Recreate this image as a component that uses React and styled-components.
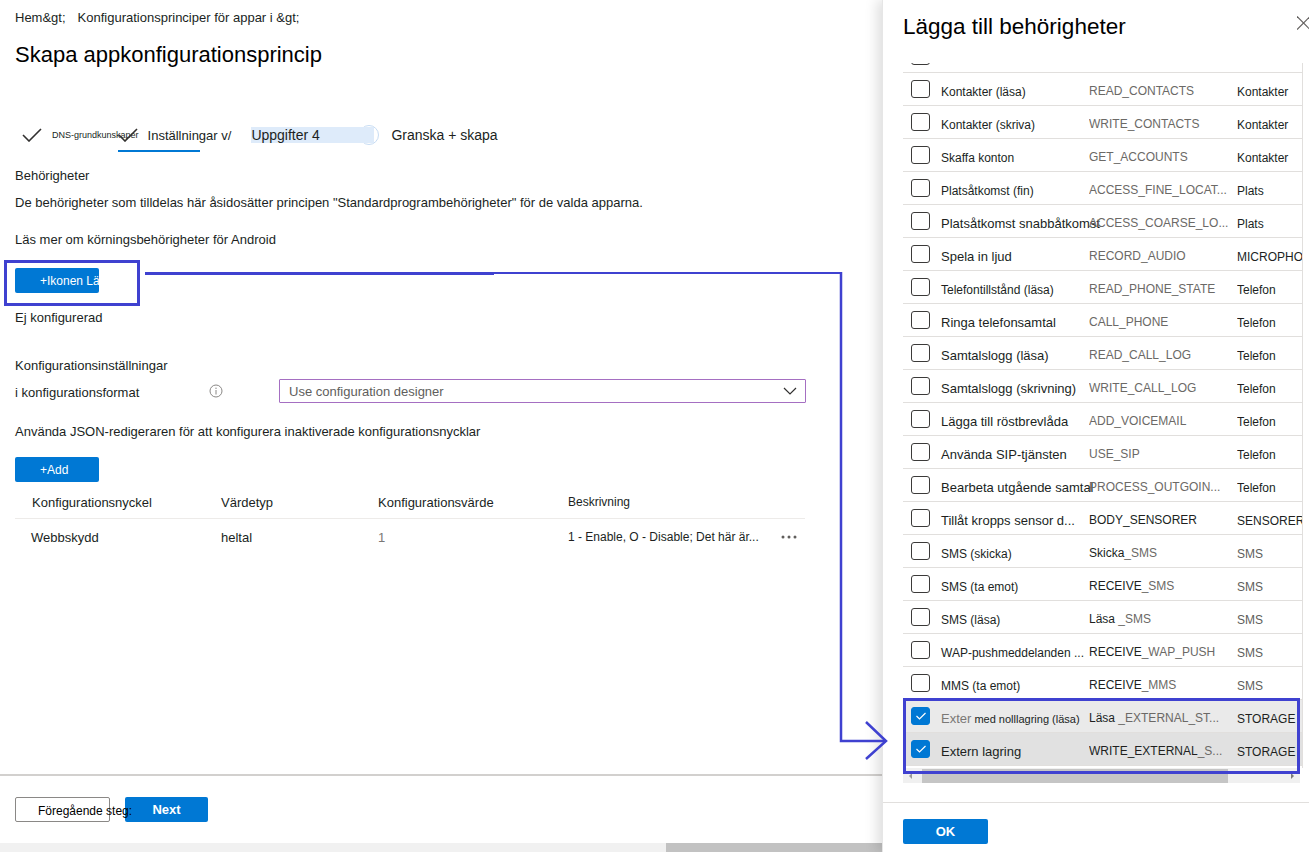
import React from 'react';
import styled, { createGlobalStyle } from 'styled-components';

const Global = createGlobalStyle`
  html, body { margin: 0; padding: 0; width: 1309px; height: 852px; overflow: hidden; background: #fff; }
  body { font-family: "Liberation Sans", Arial, sans-serif; color: #201f1e; }
  * { box-sizing: border-box; }
`;

const Shell = styled.div`
  position: relative;
  display: flex;
  width: 1309px;
  height: 852px;
  overflow: hidden;
`;

const Main = styled.main`
  width: 882px;
  flex: none;
  height: 852px;
  display: flex;
  flex-direction: column;
`;

const Content = styled.div`
  flex: 1;
  padding: 10px 0 0 15px;
  display: flex;
  flex-direction: column;
  align-items: flex-start;
`;

const Breadcrumb = styled.nav`
  display: flex;
  gap: 12px;
  font-size: 13px;
  line-height: 16px;
  color: #201f1e;
`;

const Title = styled.h1`
  margin: 15px 0 0;
  font-size: 22px;
  line-height: 28px;
  font-weight: 400;
  color: #000;
`;

const Steps = styled.div`
  display: flex;
  align-items: center;
  height: 30px;
  margin-top: 51px;
`;

const CheckIcon = styled.svg`
  flex: none;
  margin-left: ${p => p.$ml || 0}px;
`;

const SmallStepLabel = styled.span`
  font-size: 9px;
  margin-left: 10px;
  white-space: nowrap;
`;

const ActiveStep = styled.div`
  position: relative;
  display: flex;
  align-items: center;
  align-self: stretch;
  margin-left: -21px;
  &::after {
    content: '';
    position: absolute;
    left: 0;
    bottom: -2px;
    width: 82px;
    height: 2px;
    background: #0078d4;
  }
`;

const StepLabel = styled.span`
  font-size: ${p => p.$size || 14}px;
  margin-left: ${p => p.$ml || 0}px;
  white-space: nowrap;
  color: #201f1e;
`;

const StepPill = styled.span`
  position: relative;
  z-index: 1;
  margin-left: 20px;
  width: 123px;
  height: 16px;
  line-height: 16px;
  font-size: 14px;
  background: #deebfa;
  white-space: nowrap;
`;

const StepCircle = styled.span`
  width: 20px;
  height: 20px;
  margin-left: -15px;
  border: 1.5px solid #c7dcf3;
  border-radius: 50%;
  background: #fff;
`;

const Text = styled.p`
  margin: ${p => p.$mt || 0}px 0 0;
  font-size: 13px;
  line-height: 16px;
  color: #201f1e;
`;

const PrimaryButton = styled.button`
  margin-top: ${p => p.$mt || 0}px;
  width: 84px;
  height: 25px;
  padding: 0 0 0 25px;
  border: none;
  border-radius: 2px;
  background: #0078d4;
  color: #fff;
  font-family: inherit;
  font-size: 12px;
  text-align: left;
  white-space: nowrap;
  overflow: hidden;
`;

const ConfigRow = styled.div`
  display: flex;
  align-items: center;
  margin-top: 5px;
  height: 24px;
`;

const FieldLabel = styled.span`
  width: 194px;
  font-size: 13px;
  padding-top: 2px;
  color: #201f1e;
`;

const Dropdown = styled.div`
  margin-left: 56px;
  width: 527px;
  height: 24px;
  border: 1px solid #a56fc2;
  border-radius: 1px;
  display: flex;
  align-items: center;
  justify-content: space-between;
  padding: 0 8px 0 9px;
  font-size: 13px;
  color: #605e5c;
`;

const Table = styled.div`
  margin-top: 4px;
  width: 790px;
`;

const TableRow = styled.div`
  display: grid;
  grid-template-columns: 206px 157px 190px 1fr;
  align-items: center;
  height: ${p => (p.$head ? 33 : 36)}px;
  border-bottom: ${p => (p.$head ? '1px solid #edebe9' : 'none')};
  font-size: 13px;
  color: #201f1e;
`;

const Cell = styled.div`
  padding-left: ${p => p.$pl || 0}px;
  padding-right: ${p => p.$pr || 0}px;
  font-size: ${p => p.$size || 13}px;
  color: ${p => (p.$muted ? '#7a7876' : '#201f1e')};
  white-space: nowrap;
  display: flex;
  align-items: center;
  justify-content: space-between;
`;

const Footer = styled.footer`
  border-top: 2px solid #d2d0ce;
  padding: 21px 0 21px 15px;
  display: flex;
  gap: 15px;
`;

const SecondaryButton = styled.button`
  position: relative;
  z-index: 1;
  width: 95px;
  height: 25px;
  padding: 3px 0 0 22px;
  border: 1px solid #8a8886;
  border-radius: 2px;
  background: #fff;
  color: #000;
  font-family: inherit;
  font-size: 12px;
  text-align: left;
  white-space: nowrap;
  overflow: visible;
`;

const BoldButton = styled.button`
  width: ${p => p.$w || 83}px;
  height: 25px;
  margin-top: ${p => p.$mt || 0}px;
  border: none;
  border-radius: 2px;
  background: #0078d4;
  color: #fff;
  font-family: inherit;
  font-size: 13px;
  font-weight: 700;
`;

const PageScroll = styled.div`
  height: 9px;
  background: #f1f1f1;
  display: flex;
  align-items: center;
`;

const PageThumb = styled.div`
  margin-left: auto;
  width: 216px;
  height: 9px;
  background: #c2c2c2;
`;

const Panel = styled.aside`
  width: 427px;
  flex: none;
  height: 852px;
  position: relative;
  z-index: 2;
  background: #fff;
  box-shadow: -5px 0 12px rgba(0, 0, 0, 0.13);
  border-left: 1px solid #e6e6e6;
  padding-left: 20px;
  display: flex;
  flex-direction: column;
  overflow: hidden;
`;

const PanelHeader = styled.header`
  margin-top: 12px;
  height: 30px;
  display: flex;
  justify-content: space-between;
  align-items: flex-start;
`;

const PanelTitle = styled.h2`
  margin: 0;
  font-size: 22.5px;
  line-height: 30px;
  font-weight: 400;
  color: #000;
`;

const CloseIcon = styled.svg`
  margin-top: 4px;
`;

const Viewport = styled.div`
  margin-top: 21px;
  width: 400px;
  height: 705px;
  overflow: hidden;
  border-right: 1px solid #e1dfdd;
`;

const List = styled.div`
  margin-top: -23px;
`;

const PermRow = styled.div`
  display: grid;
  grid-template-columns: 38px 148px 148px 1fr;
  align-items: center;
  height: 33px;
  border-bottom: 1px solid #e1dfdd;
  background: ${p => p.$bg || '#fff'};
`;

const Box = styled.span`
  margin-left: 8px;
  width: 19px;
  height: 18px;
  border-radius: 3px;
  border: 1.5px solid ${p => (p.$checked ? '#0078d4' : '#3b3a39')};
  background: ${p => (p.$checked ? '#0078d4' : '#fff')};
  display: flex;
  align-items: center;
  justify-content: center;
`;

const NameCell = styled.span`
  font-size: ${p => (p.$large ? 13 : 12)}px;
  color: #201f1e;
  white-space: nowrap;
  padding-top: 5px;
`;

const PermCell = styled.span`
  font-size: 12px;
  color: ${p => (p.$dark ? '#201f1e' : '#6b6966')};
  white-space: nowrap;
  overflow: hidden;
  padding-top: 3px;
`;

const GroupCell = styled.span`
  font-size: 12px;
  color: ${p => (p.$muted ? '#605e5c' : '#201f1e')};
  white-space: nowrap;
  overflow: hidden;
  padding-top: 5px;
`;

const Faint = styled.span`
  color: ${p => p.$c || '#8a8886'};
  font-size: ${p => (p.$size ? `${p.$size}px` : 'inherit')};
`;

const HScroll = styled.div`
  width: 397px;
  height: 15px;
  background: #f0f0f0;
  display: flex;
  align-items: center;
  padding: 0 6px;
`;

const HThumb = styled.div`
  margin-left: 10px;
  width: 306px;
  height: 14px;
  background: #c5c5c5;
`;

const Arrow = styled.span`
  width: 0;
  height: 0;
  border-top: 3px solid transparent;
  border-bottom: 3px solid transparent;
  ${p => (p.$right ? 'border-left: 3px solid #7a7a7a; margin-left: auto;' : 'border-right: 3px solid #9a9a9a;')}
`;

const PanelDivider = styled.div`
  margin: 19px 0 0 -20px;
  width: 427px;
  height: 1px;
  background: #e1dfdd;
`;

const Overlay = styled.svg`
  position: absolute;
  left: 0;
  top: 0;
  pointer-events: none;
  z-index: 10;
`;

const Check = ({ ml }) => (
  <CheckIcon $ml={ml} width="20" height="14" viewBox="0 0 20 14">
    <polyline points="1,7 7,13 19,1" fill="none" stroke="#323130" strokeWidth="1.6" />
  </CheckIcon>
);

const InfoIcon = () => (
  <svg width="14" height="14" viewBox="0 0 14 14">
    <circle cx="7" cy="7" r="6" fill="none" stroke="#8a8886" strokeWidth="1" />
    <line x1="7" y1="6" x2="7" y2="10.5" stroke="#8a8886" strokeWidth="1" />
    <circle cx="7" cy="4.2" r="0.7" fill="#8a8886" />
  </svg>
);

const Chevron = () => (
  <svg width="14" height="8" viewBox="0 0 14 8">
    <polyline points="1,1 7,7 13,1" fill="none" stroke="#323130" strokeWidth="1.2" />
  </svg>
);

const MoreDots = () => (
  <svg width="16" height="4" viewBox="0 0 16 4">
    <circle cx="2" cy="2" r="1.5" fill="#605e5c" />
    <circle cx="8" cy="2" r="1.5" fill="#605e5c" />
    <circle cx="14" cy="2" r="1.5" fill="#605e5c" />
  </svg>
);

const Checkbox = ({ checked }) => (
  <Box $checked={checked}>
    {checked && (
      <svg width="12" height="10" viewBox="0 0 12 10">
        <polyline points="1.5,5 4.5,8 10.5,2" fill="none" stroke="#fff" strokeWidth="1.2" />
      </svg>
    )}
  </Box>
);

const perms = [
  { name: '', perm: '', group: '' },
  { name: 'Kontakter (läsa)', perm: 'READ_CONTACTS', group: 'Kontakter' },
  { name: 'Kontakter (skriva)', perm: 'WRITE_CONTACTS', group: 'Kontakter' },
  { name: 'Skaffa konton', perm: 'GET_ACCOUNTS', group: 'Kontakter' },
  { name: 'Platsåtkomst (fin)', perm: 'ACCESS_FINE_LOCAT...', group: 'Plats' },
  { name: 'Platsåtkomst snabbåtkomst', perm: 'ACCESS_COARSE_LO...', group: 'Plats', large: true },
  { name: 'Spela in ljud', perm: 'RECORD_AUDIO', group: 'MICROPHONE', large: true },
  { name: 'Telefontillstånd (läsa)', perm: 'READ_PHONE_STATE', group: 'Telefon' },
  { name: 'Ringa telefonsamtal', perm: 'CALL_PHONE', group: 'Telefon', large: true },
  { name: 'Samtalslogg (läsa)', perm: 'READ_CALL_LOG', group: 'Telefon', large: true },
  { name: 'Samtalslogg (skrivning)', perm: 'WRITE_CALL_LOG', group: 'Telefon', large: true },
  { name: 'Lägga till röstbrevlåda', perm: 'ADD_VOICEMAIL', group: 'Telefon', large: true },
  { name: 'Använda SIP-tjänsten', perm: 'USE_SIP', group: 'Telefon', large: true },
  { name: 'Bearbeta utgående samtal', perm: 'PROCESS_OUTGOIN...', group: 'Telefon', large: true },
  { name: 'Tillåt kropps sensor d...', perm: 'BODY_SENSORER', group: 'SENSORER', large: true, dark: true },
  { name: 'SMS (skicka)', perm: ['Skicka', '_SMS'], group: 'SMS', dark: true, mutedGroup: true },
  { name: 'SMS (ta emot)', perm: ['RECEIVE', '_SMS'], group: 'SMS', dark: true, mutedGroup: true },
  { name: 'SMS (läsa)', perm: ['Läsa ', '_SMS'], group: 'SMS', dark: true, mutedGroup: true },
  { name: 'WAP-pushmeddelanden ...', perm: ['RECEIVE', '_WAP_PUSH'], group: 'SMS', dark: true, mutedGroup: true },
  { name: 'MMS (ta emot)', perm: ['RECEIVE', '_MMS'], group: 'SMS', dark: true, mutedGroup: true },
  { name: ['Exter', 'med nolllagring (läsa)'], perm: ['Läsa  ', '_EXTERNAL_ST...'], group: 'STORAGE', dark: true, checked: true, bg: '#eaeaea' },
  { name: 'Extern lagring', perm: ['WRITE_EXTERNAL', '_S...'], group: 'STORAGE', dark: true, checked: true, large: true, bg: '#e1e1e1' },
];

const renderName = (p) => {
  if (Array.isArray(p.name)) {
    return (
      <>
        <Faint $c="#7a7876" $size={13}>{p.name[0]}</Faint>
        <Faint $c="#201f1e" $size={11}>{' ' + p.name[1]}</Faint>
      </>
    );
  }
  return p.name;
};

const renderPerm = (p) => {
  if (Array.isArray(p.perm)) {
    return (
      <>
        {p.perm[0]}
        <Faint $c="#6b6966">{p.perm[1]}</Faint>
      </>
    );
  }
  return p.perm;
};

export default function App() {
  return (
    <Shell>
      <Global />
      <Main>
        <Content>
          <Breadcrumb>
            <span>{'Hem&gt;'}</span>
            <span>{'Konfigurationsprinciper för appar i &gt;'}</span>
          </Breadcrumb>
          <Title>Skapa appkonfigurationsprincip</Title>
          <Steps>
            <Check ml={7} />
            <SmallStepLabel>DNS-grundkunskaper</SmallStepLabel>
            <ActiveStep>
              <Check />
              <StepLabel $size={13} $ml={10}>Inställningar v/</StepLabel>
            </ActiveStep>
            <StepPill>Uppgifter 4</StepPill>
            <StepCircle />
            <StepLabel $ml={12}>Granska + skapa</StepLabel>
          </Steps>
          <Text $mt={18}>Behörigheter</Text>
          <Text $mt={11}>
            De behörigheter som tilldelas här åsidosätter principen "Standardprogrambehörigheter" för de valda apparna.
          </Text>
          <Text $mt={21}>Läs mer om körningsbehörigheter för Android</Text>
          <PrimaryButton $mt={20}>+Ikonen Lä</PrimaryButton>
          <Text $mt={17}>Ej konfigurerad</Text>
          <Text $mt={32}>Konfigurationsinställningar</Text>
          <ConfigRow>
            <FieldLabel>i konfigurationsformat</FieldLabel>
            <InfoIcon />
            <Dropdown>
              <span>Use configuration designer</span>
              <Chevron />
            </Dropdown>
          </ConfigRow>
          <Text $mt={21}>Använda JSON-redigeraren för att konfigurera inaktiverade konfigurationsnycklar</Text>
          <PrimaryButton $mt={17}>+Add</PrimaryButton>
          <Table>
            <TableRow $head>
              <Cell $pl={17}>Konfigurationsnyckel</Cell>
              <Cell>Värdetyp</Cell>
              <Cell>Konfigurationsvärde</Cell>
              <Cell $size={12}>Beskrivning</Cell>
            </TableRow>
            <TableRow>
              <Cell $pl={16}>Webbskydd</Cell>
              <Cell>heltal</Cell>
              <Cell $muted>1</Cell>
              <Cell $size={12} $pr={8}>
                <span>1 - Enable, O - Disable; Det här är...</span>
                <MoreDots />
              </Cell>
            </TableRow>
          </Table>
        </Content>
        <Footer>
          <SecondaryButton>Föregående steg:</SecondaryButton>
          <BoldButton>Next</BoldButton>
        </Footer>
        <PageScroll>
          <PageThumb />
        </PageScroll>
      </Main>
      <Panel>
        <PanelHeader>
          <PanelTitle>Lägga till behörigheter</PanelTitle>
          <CloseIcon width="12" height="14" viewBox="0 0 12 14">
            <line x1="0" y1="0.5" x2="13" y2="13.5" stroke="#605e5c" strokeWidth="1.2" />
            <line x1="13" y1="0.5" x2="0" y2="13.5" stroke="#605e5c" strokeWidth="1.2" />
          </CloseIcon>
        </PanelHeader>
        <Viewport>
          <List>
            {perms.map((p, i) => (
              <PermRow key={i} $bg={p.bg}>
                <Checkbox checked={p.checked} />
                <NameCell $large={p.large}>{renderName(p)}</NameCell>
                <PermCell $dark={p.dark}>{renderPerm(p)}</PermCell>
                <GroupCell $muted={p.mutedGroup}>{p.group}</GroupCell>
              </PermRow>
            ))}
          </List>
        </Viewport>
        <HScroll>
          <Arrow />
          <HThumb />
          <Arrow $right />
        </HScroll>
        <PanelDivider />
        <BoldButton $w={85} $mt={16}>OK</BoldButton>
      </Panel>
      <Overlay width="1309" height="852" viewBox="0 0 1309 852">
        <g fill="none" stroke="#3f41d0">
          <rect x="5.5" y="261.5" width="133" height="43" strokeWidth="3" />
          <line x1="145" y1="273.5" x2="494" y2="273.5" strokeWidth="3" />
          <line x1="494" y1="273" x2="842" y2="273" strokeWidth="2" />
          <polyline points="841,272 841,741 886,741" strokeWidth="2.5" />
          <polyline points="866,722 886,741 866,759" strokeWidth="2.5" />
          <rect x="904.5" y="699.5" width="394" height="73" strokeWidth="3" />
        </g>
      </Overlay>
    </Shell>
  );
}
